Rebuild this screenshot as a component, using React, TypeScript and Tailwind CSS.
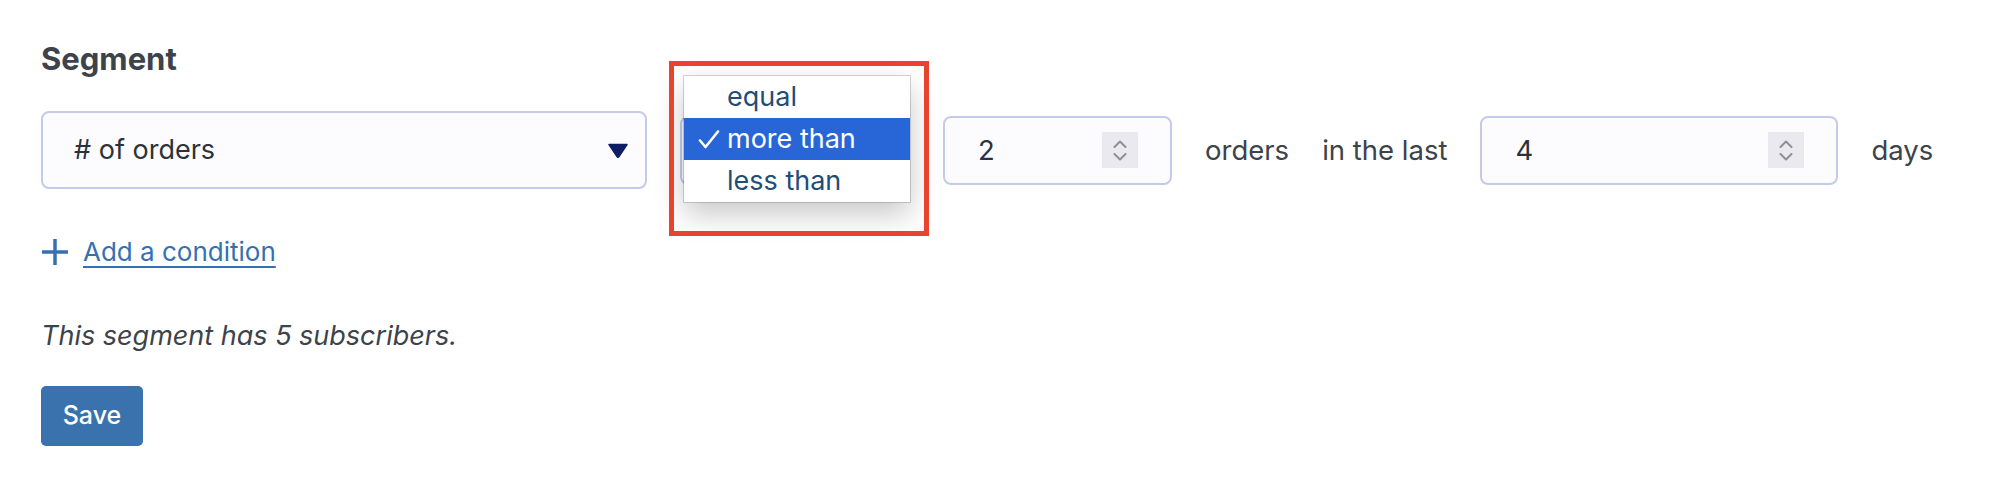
import React from 'react';

function Spinner() {
  return (
    <div className="flex h-[36px] w-[36px] flex-col items-center justify-center gap-[5px] bg-[#e9e9ef]">
      <svg width="14" height="8" viewBox="0 0 14 8" fill="none">
        <path d="M1.5 7 L7 1.5 L12.5 7" stroke="#8e8e95" strokeWidth="2" strokeLinecap="round" strokeLinejoin="round" />
      </svg>
      <svg width="14" height="8" viewBox="0 0 14 8" fill="none">
        <path d="M1.5 1 L7 6.5 L12.5 1" stroke="#8e8e95" strokeWidth="2" strokeLinecap="round" strokeLinejoin="round" />
      </svg>
    </div>
  );
}

function NumberField({ value, width }: { value: string; width: string }) {
  return (
    <div
      className={`flex h-[69px] ${width} shrink-0 items-center justify-between rounded-[8px] border-2 border-[#c3cbea] bg-[#fcfcff] pl-[33px] pr-[32px]`}
    >
      <span className="text-[27.5px] leading-[28px] text-[#2c3338]">{value}</span>
      <Spinner />
    </div>
  );
}

const operators = ['equal', 'more than', 'less than'];

export default function App() {
  return (
    <div className="min-h-[488px] w-[2008px] bg-white pl-[41px] pt-[39px] font-['Inter','Noto_Sans',sans-serif] text-[#3c434a]">
      {/* Heading */}
      <h2 className="text-[31px] font-bold leading-[40px] text-[#3c434a]">Segment</h2>

      {/* Condition row */}
      <div className="mt-[32px] flex h-[78px] items-center gap-[33px]">
        <div className="flex h-[78px] w-[606px] shrink-0 items-center justify-between rounded-[8px] border-2 border-[#c3cbea] bg-[#fcfcff] pl-[31px] pr-[17px]">
          <span className="text-[27px] leading-[28px] text-[#2c3338]"># of orders</span>
          <svg width="20" height="15" viewBox="0 0 20 15">
            <path d="M1 1.5 H19 L10.8 13.8 Q10 14.8 9.2 13.8 Z" fill="#0e1e66" stroke="#0e1e66" strokeWidth="1.5" strokeLinejoin="round" />
          </svg>
        </div>

        {/* Operator select with open menu */}
        <div className="relative h-[69px] w-[230px] shrink-0 rounded-[8px] border-2 border-[#c3cbea] bg-[#fcfcff]">
          <div className="absolute left-[2px] top-[-42px] z-10 w-[226px] bg-white shadow-[0_12px_28px_rgba(0,0,0,0.22),0_0_0_1px_rgba(0,0,0,0.16)]">
            {operators.map((op) => {
              const active = op === 'more than';
              return (
                <div
                  key={op}
                  className={`relative flex h-[42px] items-center pl-[43px] text-[27px] leading-[28px] ${
                    active ? 'bg-[#2866d8] text-white' : 'text-[#1f4d78]'
                  }`}
                >
                  {active && (
                    <svg className="absolute left-[14px] top-[12px]" width="22" height="19" viewBox="0 0 22 19" fill="none">
                      <path d="M2 10.5 L7.5 17 L20 1.5" stroke="white" strokeWidth="2.6" strokeLinecap="round" strokeLinejoin="round" />
                    </svg>
                  )}
                  {op}
                </div>
              );
            })}
          </div>
          <div className="pointer-events-none absolute left-[-13px] top-[-57px] z-20 h-[175px] w-[260px] border-[5px] border-[#e8432e]" />
        </div>

        <NumberField value="2" width="w-[229px]" />
        <span className="text-[27.5px] leading-[28px]">orders</span>
        <span className="text-[27.5px] leading-[28px]">in the last</span>
        <NumberField value="4" width="w-[358px]" />
        <span className="text-[27.5px] leading-[28px]">days</span>
      </div>

      {/* Add a condition */}
      <div className="mt-[49px] flex h-[28px] items-center gap-[14px] text-[#3571b1]">
        <svg width="28" height="28" viewBox="0 0 28 28">
          <path d="M14 1 V27 M1 14 H27" stroke="#3571b1" strokeWidth="3.5" />
        </svg>
        <a href="#" className="text-[26px] leading-[28px] underline decoration-[2px] underline-offset-[5px]">
          Add a condition
        </a>
      </div>

      <p className="mt-[56px] text-[27px] italic leading-[28px]">This segment has 5 subscribers.</p>

      <button
        type="button"
        className="mt-[36px] flex h-[60px] w-[102px] items-center justify-center rounded-[5px] bg-[#3a72ad] text-[25px] font-medium text-white"
      >
        Save
      </button>
    </div>
  );
}
